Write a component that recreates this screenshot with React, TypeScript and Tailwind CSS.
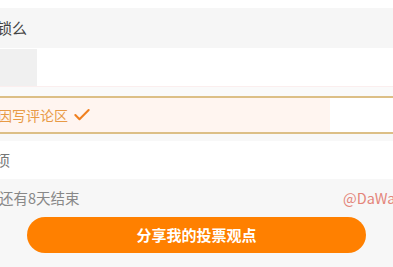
import { Check } from "lucide-react";

const font = { fontFamily: '"Noto Sans CJK SC", "Noto Sans", sans-serif' };

export default function App() {
  return (
    <div className="w-[393px] h-[267px] overflow-hidden bg-white flex flex-col" style={font}>
      <div className="h-[8px] bg-white" />
      <div className="h-[40px] bg-[#f6f6f6] flex items-center text-[15px] text-[#444] -ml-[3px] pt-[1px]">
        锁么
      </div>
      <div className="h-[37px] flex mt-[1px]">
        <div className="w-[37px] bg-[#f0f0f0]" />
        <div className="flex-1 bg-white" />
      </div>
      <div className="h-[1px] bg-[#fbeeee]" />
      <div className="h-[9px] bg-[#fafafa]" />
      <div className="h-[38px] border-y-2 border-[#dcbf86] flex">
        <div className="w-[332px] bg-[#fff5f0] flex items-center gap-[4px] -ml-[2px] text-[14px] text-[#e89a45]">
          <span>因写评论区</span>
          <Check className="w-[20px] h-[20px] text-[#f0801f]" strokeWidth={2.5} />
        </div>
        <div className="flex-1 bg-white" />
      </div>
      <div className="h-[7px] bg-[#f8f8f8]" />
      <div className="h-[38px] bg-white flex items-center text-[15px] text-[#777] -ml-[5px]">项</div>
      <div className="flex-1 bg-[#f7f7f7] flex flex-col">
        <div className="h-[38px] flex items-center justify-between text-[14.5px]">
          <span className="text-[#888] -ml-[1px]">还有8天结束</span>
          <span className="text-[#e4857a] whitespace-nowrap w-[50px] overflow-hidden">@DaWang</span>
        </div>
        <div className="px-[27px]">
          <button className="w-[339px] h-[36px] rounded-full bg-[#ff8000] text-white font-bold text-[15px]">
            分享我的投票观点
          </button>
        </div>
      </div>
    </div>
  );
}
